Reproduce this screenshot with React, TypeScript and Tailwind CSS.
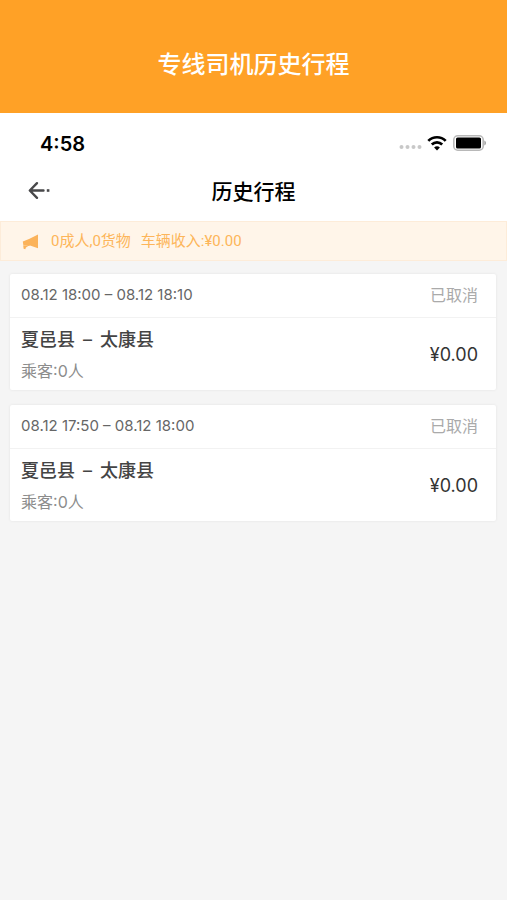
const trips = [
  { time: "08.12 18:00 – 08.12 18:10", from: "夏邑县", to: "太康县", passengers: 0, status: "已取消", price: "¥0.00" },
  { time: "08.12 17:50 – 08.12 18:00", from: "夏邑县", to: "太康县", passengers: 0, status: "已取消", price: "¥0.00" },
];

type Trip = (typeof trips)[number];

function StatusBar() {
  return (
    <div className="flex h-12 items-center justify-between pt-3 pr-5 pl-10">
      <span className="pt-0.5 text-xl leading-6 font-semibold text-black">4:58</span>
      <div className="flex items-center gap-1">
        <svg className="mt-2 h-1 w-6" viewBox="0 0 24 4" fill="#c8c8c8" aria-hidden="true">
          <circle cx="2.5" cy="2" r="2" />
          <circle cx="8.5" cy="2" r="2" />
          <circle cx="14.5" cy="2" r="2" />
          <circle cx="20.5" cy="2" r="2" />
        </svg>
        <svg className="h-4 w-5" viewBox="0 0 20 16" fill="none" stroke="#000" strokeWidth="2.7" aria-hidden="true">
          <path d="M1.3 5.9 C6.2 1 13.8 1 18.7 5.9" />
          <path d="M4.8 9.5 C7.8 6.6 12.2 6.6 15.2 9.5" />
          <path d="M10 15.4 L7.1 12.4 C8.8 10.9 11.2 10.9 12.9 12.4 Z" fill="#000" stroke="none" />
        </svg>
        <svg className="ml-0.5 h-4 w-8.5" viewBox="0 0 34 16" aria-hidden="true">
          <rect x="0.8" y="0.8" width="29.4" height="14.4" rx="4" fill="#fff" stroke="#b8b8b8" strokeWidth="1.6" />
          <rect x="3" y="2.5" width="25" height="11" rx="1.6" fill="#000" />
          <path d="M31.4 5.5 C33.4 6.3 33.4 9.7 31.4 10.5 Z" fill="#999" />
        </svg>
      </div>
    </div>
  );
}

function NavBar() {
  return (
    <div className="grid h-15 grid-cols-[80px_1fr_80px] items-center">
      <button type="button" aria-label="返回" className="flex h-11 items-center pl-7">
        <svg className="h-5 w-6" viewBox="0 0 24 20" fill="none" stroke="#48484a" strokeWidth="2.4" strokeLinecap="round" strokeLinejoin="round" aria-hidden="true">
          <path d="M9 2.2 L1.8 9.5 L9 16.8 M2.4 9.5 H15.5" />
          <rect x="18.8" y="8.2" width="2.6" height="2.6" fill="#48484a" stroke="none" />
        </svg>
      </button>
      <h2 className="pt-0.5 text-center text-[21px] leading-7 font-medium text-black">历史行程</h2>
    </div>
  );
}

function Notice() {
  return (
    <div className="flex h-10 items-center gap-3 border border-[#fdecd9] bg-[#fff5e9] pl-5 font-[Roboto,'Noto_Sans_CJK_SC',sans-serif] text-[15px] leading-5 text-[#fdb55a]">
      <svg className="mt-0.5 h-4 w-4.5 shrink-0" viewBox="0 0 18 16" fill="#fbb35b" aria-hidden="true">
        <path d="M17 0.6 V14.2 L9 11.4 L8 12 L2.4 11.4 L1.8 7.6 L8 5 Z" />
        <path d="M2.2 11.6 L6.6 12.2 V13 L5 13.2 L4.3 15.2 L2.6 14.8 Z" />
      </svg>
      <p className="whitespace-nowrap">
        <span>0成人,0货物</span>
        <span className="ml-2.5">车辆收入:¥0.00</span>
      </p>
    </div>
  );
}

function TripCard({ trip }: { trip: Trip }) {
  return (
    <li className="rounded-xs bg-white shadow-[0_0_3px_rgba(0,0,0,0.08)]">
      <div className="flex h-11 items-center justify-between border-b border-[#f2f2f2] pr-4.5 pb-0.5 pl-[11px]">
        <span className="text-[15px] leading-5 text-[#666]">{trip.time}</span>
        <span className="text-base leading-5 text-[#aaa]">{trip.status}</span>
      </div>
      <div className="flex items-center justify-between pt-2 pr-4.5 pb-[7px] pl-[11px]">
        <div>
          <h3 className="flex gap-2 text-lg leading-7 font-medium text-[#444]">
            <span>{trip.from}</span>
            <span className="font-normal">–</span>
            <span>{trip.to}</span>
          </h3>
          <p className="pt-[5px] text-base leading-6 text-[#8c8c8c]">乘客:{trip.passengers}人</p>
        </div>
        <span className="text-lg leading-7 text-[#333]">{trip.price}</span>
      </div>
    </li>
  );
}

export default function App() {
  return (
    <div className="min-h-screen bg-[#f5f5f5] font-[Inter,'Noto_Sans_CJK_SC',sans-serif]">
      <header className="flex h-[113px] items-center justify-center bg-[#ffa126] pt-4">
        <h1 className="text-2xl leading-8 font-medium text-white">专线司机历史行程</h1>
      </header>
      <main>
        <div className="bg-white">
          <StatusBar />
          <NavBar />
        </div>
        <Notice />
        <ul className="flex flex-col gap-[15px] py-[13px] pr-[11px] pl-2.5">
          {trips.map((trip) => (
            <TripCard key={trip.time} trip={trip} />
          ))}
        </ul>
      </main>
    </div>
  );
}
